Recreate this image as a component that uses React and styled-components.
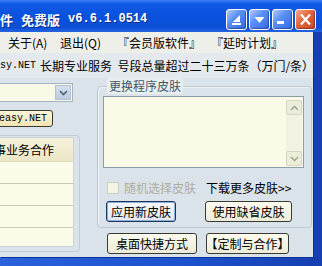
import React from 'react'
import styled, { createGlobalStyle } from 'styled-components'

const GlobalStyle = createGlobalStyle`
  html, body {
    margin: 0;
    padding: 0;
  }
  body {
    font-family: "Noto Sans CJK SC", "DejaVu Sans", sans-serif;
    font-size: 12px;
    color: #000;
  }
`

const MONO = '"Liberation Mono", "Noto Sans CJK SC", monospace'

const Window = styled.div`
  width: 322px;
  height: 266px;
  overflow: hidden;
  display: flex;
  flex-direction: column;
  background: linear-gradient(90deg, #2a62dc 0%, #1c50cc 60%, #163fb0 100%);
`

const TitleBar = styled.div`
  height: 32px;
  flex: none;
  display: flex;
  align-items: flex-end;
  padding: 0 6px 2px 0;
  box-sizing: border-box;
  background: linear-gradient(180deg, #3d7ff0 0%, #0f58e6 12%, #0a52dc 55%, #0b4fd6 85%, #2464e2 100%);
`

const Title = styled.div`
  flex: 1;
  align-self: stretch;
  display: flex;
  align-items: center;
  gap: 8px;
  padding-top: 8px;
  color: #fff;
  font-weight: bold;
  font-size: 13px;
  white-space: nowrap;
  text-shadow: 1px 1px 0 #0a2c88;
`

const Version = styled.span`
  font-family: ${MONO};
  font-size: 12px;
  font-weight: bold;
`

const Controls = styled.div`
  display: flex;
  gap: 2px;
`

const CaptionButton = styled.div`
  width: 21px;
  height: 21px;
  box-sizing: border-box;
  border: 1px solid #fff;
  border-radius: 3px;
  display: flex;
  align-items: center;
  justify-content: center;
  background: ${p => p.$close
    ? 'linear-gradient(135deg, #f3a98c 0%, #e3643c 45%, #c8461e 100%)'
    : 'linear-gradient(135deg, #b2cdfb 0%, #5a90f4 40%, #3369e4 100%)'};
  box-shadow: inset -1px -1px 1px rgba(0, 0, 40, 0.35);
`

const Client = styled.div`
  flex: 1;
  margin: 0 9px 9px 0;
  display: flex;
  flex-direction: column;
  background: #dbe3ea;
  box-shadow: 1px 1px 0 #0b3396;
  min-height: 0;
`

const MenuBar = styled.div`
  height: 21px;
  flex: none;
  display: grid;
  grid-template-columns: 52px 57px 94px auto;
  align-items: center;
  padding-left: 8px;
  background: #efefea;
  line-height: 14px;
  white-space: nowrap;
`

const MenuItem = styled.span`
  font-size: 12px;
`

const InfoRow = styled.div`
  height: 25px;
  flex: none;
  display: flex;
  align-items: center;
  white-space: nowrap;
  font-size: 12px;
  line-height: 14px;
  background: #e4e9ed;
`

const Latin = styled.span`
  font-family: ${MONO};
  font-size: ${p => p.$size || 10}px;
  margin-right: 4px;
`

const Main = styled.div`
  flex: 1;
  display: flex;
  min-height: 0;
`

const LeftCol = styled.div`
  width: 80px;
  flex: none;
  display: flex;
  flex-direction: column;
  align-items: flex-start;
  padding-bottom: 5px;
  box-sizing: border-box;
`

const Combo = styled.div`
  margin: 5px 0 0 -3px;
  width: 76px;
  height: 19px;
  box-sizing: border-box;
  border: 1px solid #a6b4c2;
  background: #f9f9e8;
  display: flex;
  justify-content: flex-end;
  padding: 1px;
`

const ComboArrow = styled.div`
  width: 16px;
  background: linear-gradient(180deg, #d6e0ec, #bccbdd);
  border: 1px solid #b2c2d6;
  box-sizing: border-box;
  display: flex;
  align-items: center;
  justify-content: center;
`

const EasyButton = styled.div`
  margin: 8px 0 0 -3px;
  width: 56px;
  height: 17px;
  box-sizing: border-box;
  border: 1px solid #3a3a32;
  border-radius: 3px;
  background: linear-gradient(180deg, #fbf6d8, #efe5b4);
  display: flex;
  align-items: center;
  padding-left: 1px;
  font-family: ${MONO};
  font-size: 10px;
  overflow: hidden;
  white-space: nowrap;
`

const ListFrame = styled.div`
  margin: 8px 0 0 -3px;
  width: 83px;
  flex: 1;
  box-sizing: border-box;
  border: 1px solid #c3ccd4;
  border-left: none;
  border-radius: 0 4px 4px 0;
  padding: 1px 5px 4px 0;
  display: flex;
`

const List = styled.div`
  flex: 1;
  background: #fbfbea;
  border: 1px solid #cdd4d8;
  border-left: none;
  display: flex;
  flex-direction: column;
  overflow: hidden;
`

const ListHeader = styled.div`
  height: 23px;
  flex: none;
  display: flex;
  align-items: center;
  margin-left: -3px;
  white-space: nowrap;
  background: linear-gradient(180deg, #f6f2dc, #ece6c6);
  border-bottom: 1px solid #e0dabc;
  font-size: 12px;
`

const ListRow = styled.div`
  height: 22px;
  flex: none;
  box-sizing: border-box;
  border-bottom: 1px solid #c9c9b6;
`

const RightCol = styled.div`
  flex: 1;
  display: flex;
  flex-direction: column;
  padding: 0 0 0 17px;
`

const Group = styled.fieldset`
  margin: 0;
  width: 201px;
  box-sizing: border-box;
  border: 1px solid #bcc7d0;
  border-radius: 4px;
  padding: 0 7px 5px 5px;
  box-shadow: inset 1px 1px 0 #eef2f5;
`

const Legend = styled.legend`
  margin-left: 4px;
  padding: 0 2px;
  font-size: 12px;
  line-height: 16px;
  color: #3f586b;
  background: #e9eef0;
  border-radius: 3px;
`

const Listbox = styled.div`
  margin-top: 2px;
  height: 72px;
  box-sizing: border-box;
  border: 1px solid #8e9ca8;
  background: #fafae8;
  display: flex;
  justify-content: flex-end;
  padding: 3px 1px 1px 0;
`

const Scrollbar = styled.div`
  width: 16px;
  display: flex;
  flex-direction: column;
  justify-content: space-between;
  background: #f2f2e0;
`

const ScrollArrow = styled.div`
  height: 15px;
  box-sizing: border-box;
  border: 1px solid #d2d6c2;
  border-radius: 2px;
  background: #ecedd8;
  display: flex;
  align-items: center;
  justify-content: center;
`

const Grid = styled.div`
  display: grid;
  grid-template-columns: 99px 99px;
  align-items: center;
  margin-left: ${p => p.$indent}px;
  margin-top: ${p => p.$top}px;
  row-gap: ${p => p.$gap || 0}px;
`

const Check = styled.label`
  display: flex;
  align-items: center;
  gap: 5px;
  margin-left: 1px;
  height: 16px;
  font-size: 12px;
  line-height: 14px;
  color: ${p => (p.$disabled ? '#abada2' : '#000')};
  white-space: nowrap;
`

const Box = styled.span`
  width: 12px;
  height: 12px;
  box-sizing: border-box;
  border: 1px solid #cbcfbf;
  background: #f3f3e6;
`

const LinkText = styled.span`
  margin-left: 1px;
  font-size: 12px;
  line-height: 14px;
  white-space: nowrap;
`

const Button = styled.div`
  width: ${p => p.$w}px;
  height: 21px;
  box-sizing: border-box;
  border: 1px solid ${p => (p.$primary ? '#1c3660' : '#3a3a32')};
  border-radius: 3px;
  background: ${p => (p.$primary
    ? 'linear-gradient(180deg, #f6f8fa, #e2e8ee)'
    : 'linear-gradient(180deg, #fbfbee, #ecebd8)')};
  box-shadow: ${p => (p.$primary ? 'inset 0 0 0 1px #8fb0dc' : 'none')};
  display: flex;
  align-items: center;
  justify-content: center;
  font-size: 12px;
  line-height: 14px;
  white-space: nowrap;
`

function TitleButtons() {
  return (
    <Controls>
      <CaptionButton>
        <svg width="19" height="19" viewBox="0 0 19 19">
          <path d="M13 5 L13 12 L6 12 Z" fill="#fff" />
          <rect x="5" y="13" width="9" height="2" fill="#fff" />
        </svg>
      </CaptionButton>
      <CaptionButton>
        <svg width="19" height="19" viewBox="0 0 19 19">
          <path d="M4.5 7 L14.5 7 L9.5 13 Z" fill="#fff" />
        </svg>
      </CaptionButton>
      <CaptionButton>
        <svg width="19" height="19" viewBox="0 0 19 19">
          <rect x="4" y="11" width="7" height="3" fill="#fff" />
        </svg>
      </CaptionButton>
      <CaptionButton $close>
        <svg width="19" height="19" viewBox="0 0 19 19">
          <path d="M5 4.5 L14 14.5 M14 4.5 L5 14.5" stroke="#fff" strokeWidth="2.2" />
        </svg>
      </CaptionButton>
    </Controls>
  )
}

function Chevron({ up, color }) {
  return (
    <svg width="9" height="6" viewBox="0 0 9 6">
      <path
        d={up ? 'M1 5 L4.5 1.5 L8 5' : 'M1 1 L4.5 4.5 L8 1'}
        fill="none"
        stroke={color}
        strokeWidth="1.6"
      />
    </svg>
  )
}

export default function App() {
  return (
    <>
      <GlobalStyle />
      <Window>
        <TitleBar>
          <Title>
            <span>件</span>
            <span>免费版</span>
            <Version>v6.6.1.0514</Version>
          </Title>
          <TitleButtons />
        </TitleBar>
        <Client>
          <MenuBar>
            <MenuItem>关于(A)</MenuItem>
            <MenuItem>退出(Q)</MenuItem>
            <MenuItem>『会员版软件』</MenuItem>
            <MenuItem>『延时计划』</MenuItem>
          </MenuBar>
          <InfoRow>
            <Latin $size={10}>sy.NET</Latin>
            长期专业服务&nbsp;&nbsp;号段总量超过二十三万条（万门/条）
          </InfoRow>
          <Main>
            <LeftCol>
              <Combo>
                <ComboArrow>
                  <Chevron color="#4a5f86" />
                </ComboArrow>
              </Combo>
              <EasyButton>easy.NET</EasyButton>
              <ListFrame>
                <List>
                  <ListHeader>事业务合作</ListHeader>
                  <ListRow />
                  <ListRow />
                  <ListRow />
                </List>
              </ListFrame>
            </LeftCol>
            <RightCol>
              <Group>
                <Legend>更换程序皮肤</Legend>
                <Listbox>
                  <Scrollbar>
                    <ScrollArrow>
                      <Chevron up color="#a3aa98" />
                    </ScrollArrow>
                    <ScrollArrow>
                      <Chevron color="#a3aa98" />
                    </ScrollArrow>
                  </Scrollbar>
                </Listbox>
                <Grid $indent={3} $top={12} $gap={5}>
                  <Check $disabled>
                    <Box />
                    随机选择皮肤
                  </Check>
                  <LinkText>下载更多皮肤&gt;&gt;</LinkText>
                  <Button $w={70} $primary>应用新皮肤</Button>
                  <Button $w={87}>使用缺省皮肤</Button>
                </Grid>
              </Group>
              <Grid $indent={10} $top={5}>
                <Button $w={90}>桌面快捷方式</Button>
                <Button $w={83}>【定制与合作】</Button>
              </Grid>
            </RightCol>
          </Main>
        </Client>
      </Window>
    </>
  )
}
